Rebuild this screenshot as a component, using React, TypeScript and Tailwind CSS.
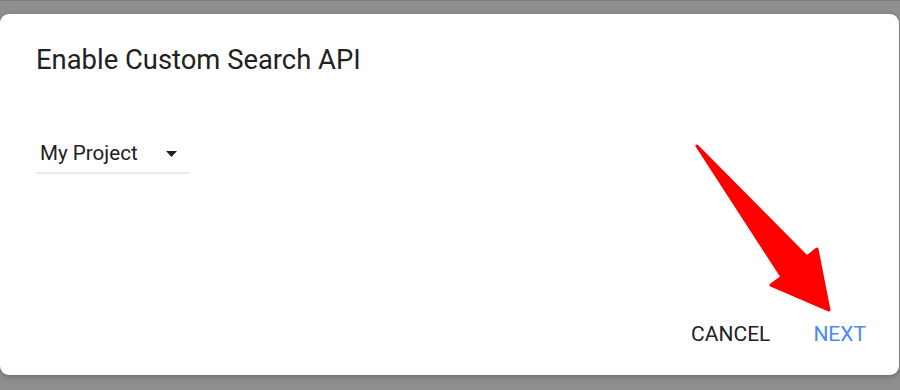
import React from "react";

export default function App() {
  return (
    <div
      className="w-[900px] h-[390px] bg-[#8f8f8f] border-t border-[#7d7d7d] pt-[13px] overflow-hidden"
      style={{ fontFamily: "Roboto, 'Liberation Sans', sans-serif" }}
    >
      <div className="relative w-[899px] h-[361px] bg-white rounded-[9px] shadow-[0_2px_6px_rgba(0,0,0,0.25)] flex flex-col pl-[36px] pr-[33px] pt-[30px] pb-[28px]">
        <h1 className="text-[27.4px] leading-[33px] font-normal text-[#212121]">
          Enable Custom Search API
        </h1>
        <div className="mt-[64px] w-[154px] flex items-center justify-between pl-[4px] pr-[13px] pb-[7px] border-b-[2px] border-[#ececec]">
          <span className="text-[20.6px] leading-[24px] text-[#212121]">My Project</span>
          <svg width="11" height="6" viewBox="0 0 11 6" className="mt-[1px]">
            <path d="M0 0 L11 0 L5.5 6 Z" fill="#212121" />
          </svg>
        </div>
        <div className="mt-auto flex justify-end items-center gap-[43px]">
          <span className="text-[21px] leading-[25px] text-[#212121]">CANCEL</span>
          <span className="text-[21px] leading-[25px] text-[#4a8af4]">NEXT</span>
        </div>
        <svg
          className="absolute left-0 top-[-14px] pointer-events-none"
          width="900"
          height="390"
          viewBox="0 0 900 390"
        >
          <polygon
            points="697,146 807,257 817,249 829,310 771,285 782,277"
            fill="#ff0000"
            stroke="#ff0000"
            strokeWidth="3"
            strokeLinejoin="round"
          />
        </svg>
      </div>
    </div>
  );
}
